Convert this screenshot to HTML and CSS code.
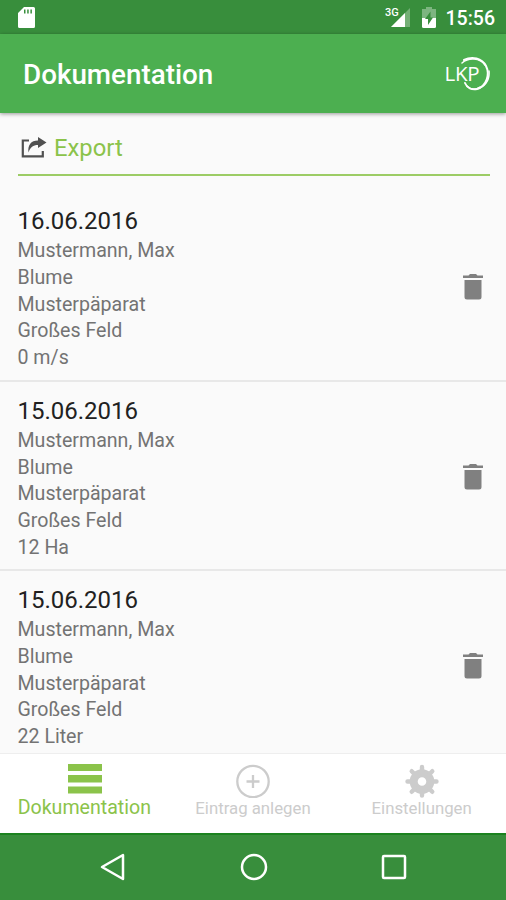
FILE: index.html
```html
<!DOCTYPE html>
<html lang="de">
  <head>
    <meta charset="UTF-8" />
    <meta name="viewport" content="width=device-width, initial-scale=1.0" />
    <title>Dokumentation</title>
    <link rel="stylesheet" href="styles.css">
  </head>
  <body>
    <div class="statusbar">
      <svg class="sd-icon" width="17" height="21" viewBox="0 0 17 21">
        <path fill="#fff" fill-rule="evenodd" d="M6 0h9.500q1.500 0 1.500 1.500v18q0 1.500-1.500 1.500h-14q-1.500 0-1.500-1.500V6zM6 2.500v4h1.500v-4zM9.200 2.500v4h1.500v-4zM12.400 2.500v4h1.500v-4z" />
      </svg>
      <div class="status-right">
        <svg width="26" height="21" viewBox="0 0 26 21">
          <path fill="#fff" opacity=".3" d="M25 1v19H6z" />
          <path fill="#fff" d="M20 6v14H6z" />
          <text class="network" x="0" y="9">3G</text>
        </svg>
        <svg class="battery" width="14" height="21" viewBox="0 0 14 21">
          <path fill="#fff" opacity=".35" d="M4 0h6v2h4v9H0V2h4z" />
          <path fill="#fff" d="M0 11h14v8.500q0 1.500-1.500 1.500h-11Q0 21 0 19.500z" />
          <path fill="#388e3c" d="M8.500 4.500v6H11L6 18v-6H3z" />
        </svg>
        <span class="clock">15:56</span>
      </div>
    </div>

    <header class="appbar">
      <h1>Dokumentation</h1>
      <svg class="logo" width="48" height="38" viewBox="0 0 48 38">
        <g fill="none" stroke="#fff" stroke-linecap="round">
          <path stroke-width="2" d="M21 5C29 1 39 3 43 11s1 20-9 23c-5 1-10-1-12-6" />
          <path stroke-width="1.500" d="M19 8C26 2 37 3 42 10M46 16c1 10-5 17-13 18M24 31c4 4 9 4 13 1" />
        </g>
        <text class="logo-text" x="1.500" y="26">LKP</text>
      </svg>
    </header>

    <main class="content">
      <div class="export">
        <svg width="27" height="22" viewBox="0 0 27 22">
          <path fill="none" stroke="#505050" stroke-width="2.200" d="M8 3.500H1.800v15.800h20V14" />
          <path fill="#505050" d="M17 0l8.500 5.500-8.500 5.500V8c-5 0-7.500 2-9.500 7.500C6.500 8 10 3.500 17 3.500z" />
        </svg>
        <span>Export</span>
      </div>

      <ul class="entries">
        <li>
          <div>
            <h2>16.06.2016</h2>
            <p>Mustermann, Max</p>
            <p>Blume</p>
            <p>Musterpäparat</p>
            <p>Großes Feld</p>
            <p>0 m/s</p>
          </div>
          <svg class="trash" width="20" height="26" viewBox="0 0 20 26">
            <path d="M0 1.500h5.500L7 0h6l1.500 1.500H20V4H0zM1.500 6h17v17q0 2.500-2.500 2.500H4Q1.500 25.500 1.500 23z" />
          </svg>
        </li>
        <li>
          <div>
            <h2>15.06.2016</h2>
            <p>Mustermann, Max</p>
            <p>Blume</p>
            <p>Musterpäparat</p>
            <p>Großes Feld</p>
            <p>12 Ha</p>
          </div>
          <svg class="trash" width="20" height="26" viewBox="0 0 20 26">
            <path d="M0 1.500h5.500L7 0h6l1.500 1.500H20V4H0zM1.500 6h17v17q0 2.500-2.500 2.500H4Q1.500 25.500 1.500 23z" />
          </svg>
        </li>
        <li>
          <div>
            <h2>15.06.2016</h2>
            <p>Mustermann, Max</p>
            <p>Blume</p>
            <p>Musterpäparat</p>
            <p>Großes Feld</p>
            <p>22 Liter</p>
          </div>
          <svg class="trash" width="20" height="26" viewBox="0 0 20 26">
            <path d="M0 1.500h5.500L7 0h6l1.500 1.500H20V4H0zM1.500 6h17v17q0 2.500-2.500 2.500H4Q1.500 25.500 1.500 23z" />
          </svg>
        </li>
      </ul>
    </main>

    <nav class="tabs">
      <a class="tab active">
        <svg width="34" height="34" viewBox="0 0 34 34">
          <path fill="currentColor" d="M0 0h34v7H0zM0 11h34v7.500H0zM0 22.500h34v7H0z" />
        </svg>
        <span>Dokumentation</span>
      </a>
      <a class="tab">
        <svg width="34" height="34" viewBox="0 0 34 34">
          <g fill="none" stroke="currentColor" stroke-width="2.300">
            <circle cx="17" cy="17.500" r="15.700" />
            <path d="M17 11v13M10.500 17.500h13" />
          </g>
        </svg>
        <span>Eintrag anlegen</span>
      </a>
      <a class="tab">
        <svg width="34" height="34" viewBox="0 0 34 34">
          <g fill="none" stroke="currentColor">
            <circle cx="17" cy="17.500" r="8.300" stroke-width="8" />
            <path stroke-width="4.400" stroke-linecap="round" d="M17 3v5M17 27v4.500M2.500 17.500h5M26.500 17.500h5M6.700 7.200l3.500 3.500M23.800 24.300l3.500 3.500M6.700 27.800l3.500-3.500M23.800 10.700l3.500-3.500" />
          </g>
        </svg>
        <span>Einstellungen</span>
      </a>
    </nav>

    <div class="navbar">
      <svg width="28" height="28" viewBox="0 0 28 28">
        <path d="M24 2v24L3 14z" />
      </svg>
      <svg width="28" height="28" viewBox="0 0 28 28">
        <circle cx="14" cy="14" r="12" />
      </svg>
      <svg width="28" height="28" viewBox="0 0 28 28">
        <rect x="3" y="3" width="22" height="22" rx="1" />
      </svg>
    </div>
  </body>
</html>
```

FILE: styles.css
```css
* {
  box-sizing: border-box;
}
body {
  margin: 0;
  height: 900px;
  display: flex;
  flex-direction: column;
  overflow: hidden;
  background: #fafafa;
  font-family: Roboto, sans-serif;
}
h1,
h2,
p,
ul {
  margin: 0;
  padding: 0;
}
svg {
  display: block;
  flex: none;
}

.statusbar {
  flex: none;
  height: 34px;
  padding: 0 11px 0 18px;
  display: flex;
  align-items: center;
  justify-content: space-between;
  background: #388e3c;
  color: #fff;
}
.status-right {
  display: flex;
  align-items: center;
}
.network {
  fill: #fff;
  font-size: 11px;
  font-weight: 500;
}
.battery {
  margin: 0 10px 0 11px;
}
.clock {
  font-size: 19.5px;
  font-weight: 500;
  line-height: 32px;
  padding-top: 3px;
}

.appbar {
  flex: none;
  height: 79px;
  padding: 0 15px 0 23px;
  display: flex;
  align-items: center;
  justify-content: space-between;
  background: #4caf50;
  color: #fff;
  box-shadow: 0 1px 4px rgba(0, 0, 0, 0.4);
}
.appbar h1 {
  padding-top: 2px;
  font-size: 27.8px;
  font-weight: 500;
}
.logo-text {
  fill: #fff;
  font-family: "Open Sans", sans-serif;
  font-size: 20.5px;
  letter-spacing: -0.3px;
}

.content {
  flex: 1;
  min-height: 0;
  overflow: hidden;
}
.export {
  height: 63px;
  margin: 0 16px 16px 18px;
  padding: 8px 0 0 3px;
  display: flex;
  align-items: center;
  gap: 6px;
  border-bottom: 2px solid #9ccc65;
  color: #8bc34a;
  font-size: 23.8px;
}
.entries {
  list-style-type: none;
}
.entries li {
  height: 189.5px;
  padding: 13px 23px 0 17.5px;
  display: flex;
  justify-content: space-between;
  border-bottom: 2px solid #e8e8e8;
}
.entries h2 {
  margin-bottom: 1.3px;
  color: #212121;
  font-size: 24px;
  font-weight: 400;
  line-height: 32px;
}
.entries p {
  color: #737373;
  font-size: 19.6px;
  line-height: 26.7px;
}
.trash {
  margin-top: 69px;
  fill: #808080;
}

.tabs {
  flex: none;
  height: 80px;
  padding-top: 10px;
  display: grid;
  grid-template-columns: repeat(3, 1fr);
  border-top: 1px solid #eee;
  background: #fff;
}
.tab {
  display: flex;
  flex-direction: column;
  align-items: center;
  color: #ccc;
  font-size: 16.8px;
  line-height: 20px;
}
.tab svg {
  margin-left: 1px;
}
.tab.active {
  color: #8bc34a;
  font-size: 19.6px;
}

.navbar {
  flex: none;
  height: 67px;
  padding: 0 0 2px 1px;
  display: flex;
  align-items: center;
  justify-content: center;
  gap: 112.5px;
  border-top: 2px solid #1b821f;
  background: #388e3c;
}
.navbar svg {
  fill: none;
  stroke: #fff;
  stroke-width: 2.5;
  stroke-linejoin: round;
}
```
